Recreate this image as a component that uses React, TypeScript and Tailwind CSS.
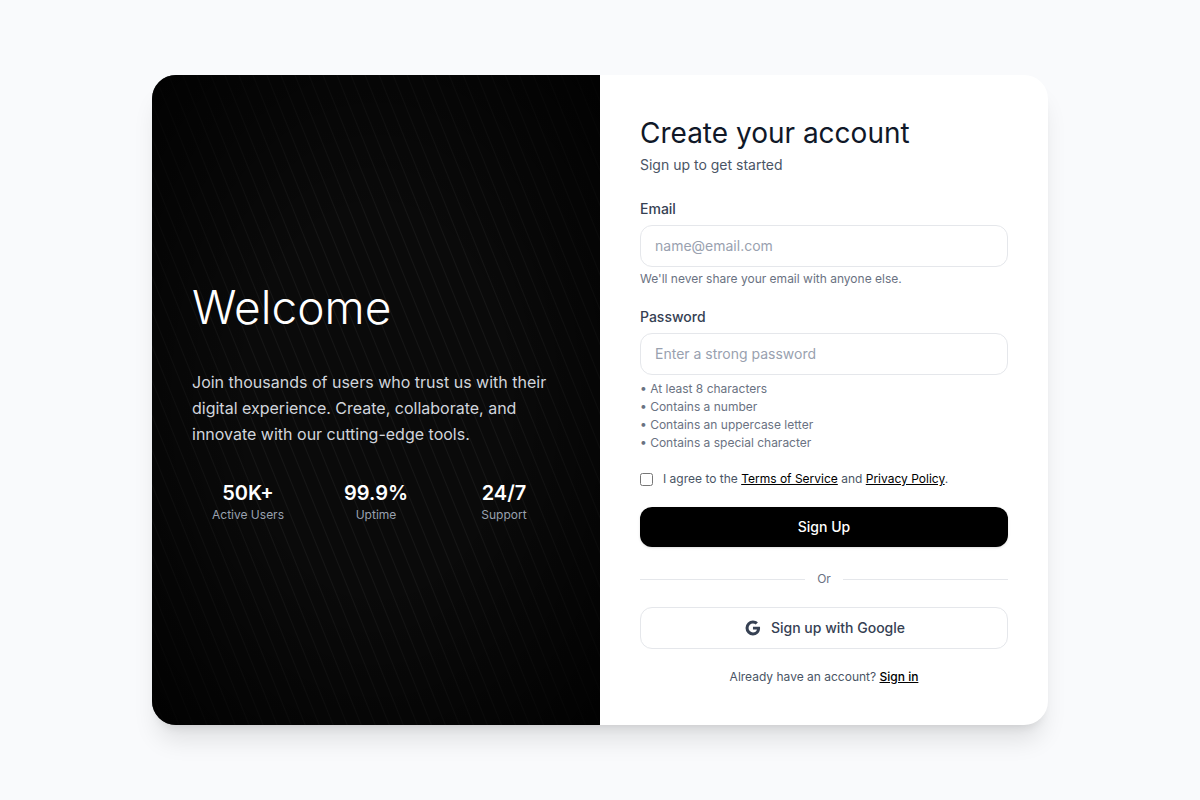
import { BiLogoGoogle } from "react-icons/bi";

const stats = [
  { value: "50K+", label: "Active Users" },
  { value: "99.9%", label: "Uptime" },
  { value: "24/7", label: "Support" },
];

const rules = [
  "At least 8 characters",
  "Contains a number",
  "Contains an uppercase letter",
  "Contains a special character",
];

const fieldClass =
  "mt-1.5 block w-full rounded-xl border border-gray-200 bg-white px-3.5 py-2.5 text-sm text-gray-900 placeholder:text-gray-400 focus:outline-none focus:ring-2 focus:ring-black";

function WelcomePanel() {
  return (
    <section className="flex flex-col justify-center bg-[#0a0a0a] bg-[radial-gradient(ellipse_at_center,transparent_40%,rgba(0,0,0,0.85)_100%),repeating-linear-gradient(68deg,transparent_0px,transparent_11px,rgba(255,255,255,0.05)_12px,transparent_13px)] p-10 text-white">
      <h1 className="text-[46px] leading-[60px] font-light">Welcome</h1>
      <p className="mt-8 text-base leading-[26px] text-gray-300">
        Join thousands of users who trust us with their digital experience. Create, collaborate, and
        innovate with our cutting-edge tools.
      </p>
      <dl className="mt-8 grid grid-cols-3 gap-4 text-center">
        {stats.map((stat) => (
          <div key={stat.label} className="flex flex-col-reverse">
            <dt className="text-xs text-gray-400">{stat.label}</dt>
            <dd className="text-xl font-semibold">{stat.value}</dd>
          </div>
        ))}
      </dl>
    </section>
  );
}

function SignUpForm() {
  return (
    <section className="p-10">
      <h2 className="text-[28px] leading-9 text-gray-900">Create your account</h2>
      <p className="mt-1 text-sm text-gray-600">Sign up to get started</p>

      <form className="mt-6" onSubmit={(event) => event.preventDefault()}>
        <label htmlFor="email" className="block text-sm font-medium text-gray-700">
          Email
        </label>
        <input id="email" type="email" placeholder="name@email.com" className={fieldClass} />
        <p className="mt-1 text-xs text-gray-500">We'll never share your email with anyone else.</p>

        <label htmlFor="password" className="mt-5 block text-sm font-medium text-gray-700">
          Password
        </label>
        <input id="password" type="password" placeholder="Enter a strong password" className={fieldClass} />
        <ul className="mt-1.5 space-y-0.5 text-xs text-gray-500">
          {rules.map((rule) => (
            <li key={rule}>• {rule}</li>
          ))}
        </ul>

        <div className="mt-5 flex items-center gap-2.5 text-xs text-gray-600">
          <input id="terms" type="checkbox" className="size-[13px]" />
          <label htmlFor="terms">
            I agree to the{" "}
            <a href="#terms" className="text-black underline">
              Terms of Service
            </a>{" "}
            and{" "}
            <a href="#privacy" className="text-black underline">
              Privacy Policy
            </a>
            .
          </label>
        </div>

        <button
          type="submit"
          className="mt-5 w-full rounded-xl bg-black py-2.5 text-sm font-medium text-white shadow-sm"
        >
          Sign Up
        </button>

        <div className="mt-6 flex items-center gap-3 text-xs text-gray-500">
          <span className="h-px flex-1 bg-gray-200" />
          Or
          <span className="h-px flex-1 bg-gray-200" />
        </div>

        <button
          type="button"
          className="mt-5 flex w-full items-center justify-center gap-2 rounded-xl border border-gray-200 bg-white py-2.5 text-sm font-medium text-gray-700"
        >
          <BiLogoGoogle className="size-5" aria-hidden="true" />
          Sign up with Google
        </button>
      </form>

      <p className="mt-5 text-center text-xs text-gray-600">
        Already have an account?{" "}
        <a href="#signin" className="font-medium text-black underline">
          Sign in
        </a>
      </p>
    </section>
  );
}

export default function App() {
  return (
    <main className="flex min-h-screen items-center justify-center bg-[#f9fafc] p-4 font-['Inter','Liberation_Sans',sans-serif]">
      <div className="grid w-full max-w-4xl overflow-hidden rounded-3xl bg-white shadow-xl md:grid-cols-2">
        <WelcomePanel />
        <SignUpForm />
      </div>
    </main>
  );
}
